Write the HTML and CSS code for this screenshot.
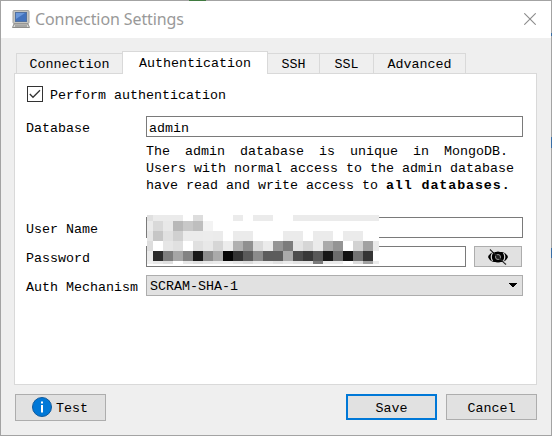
FILE: index.html
```html
<!DOCTYPE html>
<html lang="en">
<head>
<meta charset="utf-8">
<title>Connection Settings</title>
<link rel="stylesheet" href="styles.css">
</head>
<body>
<div class="window">
  <header class="titlebar">
    <svg class="app-icon" width="18" height="19" viewBox="0 0 18 19">
      <rect x="1" y=".5" width="16" height="13" rx="1" fill="#c4c4c0" stroke="#a2a2a0"/>
      <rect x="3.500" y="2.500" width="11" height="9" fill="#4272bd" stroke="#51709f"/>
      <path d="M4 3h9L4 9z" fill="#6b98da"/>
      <path d="M2 14h14l1.500 3.500H.5z" fill="#d6d6d2" stroke="#8d8d8b"/>
      <path d="M3 16h12" stroke="#777"/>
    </svg>
    <h1 class="title">Connection Settings</h1>
    <svg class="close" width="12" height="12" viewBox="0 0 12 12"><path d="M.3.3l11.400 11.400M11.700.3L.3 11.700" stroke="#8c8c8c" stroke-width="1.100"/></svg>
  </header>
  <main class="body">
    <nav class="tabs">
      <div class="tab tab-connection">Connection</div>
      <div class="tab tab-auth active">Authentication</div>
      <div class="tab tab-ssh">SSH</div>
      <div class="tab tab-ssl">SSL</div>
      <div class="tab tab-advanced">Advanced</div>
    </nav>
    <section class="pane">
      <div class="check-row">
        <span class="checkbox"><svg width="14" height="14" viewBox="0 0 14 14"><path d="M1.800 7l3.200 3.300L12 3.300" fill="none" stroke="#333" stroke-width="1.300"/></svg></span>
        <span class="check-label">Perform authentication</span>
      </div>
      <div class="row row-database">
        <span class="label">Database</span>
        <div class="input">admin</div>
      </div>
      <div class="hint">
        <div class="hint-line first">The admin database is unique in MongoDB.</div>
        <div class="hint-line">Users with normal access to the admin database</div>
        <div class="hint-line">have read and write access to <b>all databases.</b></div>
      </div>
      <div class="row row-user">
        <span class="label">User Name</span>
        <div class="input"><div class="mosaic" id="mosaic"></div></div>
      </div>
      <div class="row row-password">
        <span class="label">Password</span>
        <div class="input"></div>
        <div class="button eye">
          <svg width="22" height="18" viewBox="0 0 22 18">
            <path d="M1 9Q3 4.500 7 4h8q4 .5 6 5-2 4.500-6 5H7Q3 13.500 1 9z" fill="#000"/>
            <path d="M5.500 5q-2.500 4 0 8M16.500 5q2.500 4 0 8" fill="none" stroke="#ddd" stroke-width="1.200"/>
            <circle cx="11" cy="9" r="5.500" fill="#000"/>
            <circle cx="11" cy="9" r="2.500" fill="#222" stroke="#999" stroke-width="1"/>
            <path d="M3 1.500l16 15" stroke="#222" stroke-width="1.200"/>
            <path d="M4.500 1.500l3 3M16 12.500l3 3" stroke="#e1e1e1" stroke-width=".7"/>
          </svg>
        </div>
      </div>
      <div class="row row-mechanism">
        <span class="label">Auth Mechanism</span>
        <div class="select"><span>SCRAM-SHA-1</span><svg width="8" height="5" viewBox="0 0 8 5" shape-rendering="crispEdges"><path d="M0 0h8L4 4.500z" fill="#000"/></svg></div>
      </div>
    </section>
    <footer class="actions">
      <div class="button test">
        <svg width="20" height="20" viewBox="0 0 20 20"><circle cx="10" cy="10" r="9.500" fill="#0078d7" stroke="#125a9b"/><path d="M9 8h2v7.500H9zM9 4.500h2v2H9z" fill="#fff"/></svg>
        <span>Test</span>
      </div>
      <div class="button save">Save</div>
      <div class="button cancel">Cancel</div>
    </footer>
  </main>
</div>
<script src="mosaic.js"></script>
</body>
</html>
```
FILE: mosaic.js
```js
// Gray levels of the blocks that hide the credentials, one string per row.
const rows = [
  "e0 eb eb eb ff dd ff ff ff eb ff eb eb ff ff eb eb eb eb eb eb eb eb eb",
  "eb d9 e8 b8 c8 be f3 ff ff ff ff ff ff ff ff ff ff ff ff ff ff ff ff ff",
  "e6 c6 e0 d0 eb eb ec eb ff eb eb ff ff ff eb eb ff eb eb ff eb eb ff ff",
  "dd ff e6 e0 ff e0 e8 d6 ec b0 90 da eb 95 7c e4 d6 eb aa 94 ff d2 a2 eb",
  "eb 2a 7d a5 82 17 8c aa 05 33 5a 8b 5c 5c aa 4c 38 58 17 6c 11 72 35 ff",
  "f0 e8 e0 ff e8 e0 e8 eb ec e4 dd eb eb e2 eb e4 e4 7c eb eb ff dd a2 eb"
];
const mosaic = document.getElementById("mosaic");
for (const level of rows.join(" ").split(" ")) {
  const block = document.createElement("i");
  block.style.background = "#" + level.repeat(3);
  mosaic.append(block);
}
```
FILE: styles.css
```css
* { box-sizing: border-box; }
body {
  margin: 0;
  width: 552px;
  height: 436px;
  overflow: hidden;
  color: #000;
  font: 13.33px/16px "Liberation Mono", monospace;
}
svg { display: block; flex: none; }
/* The 1px frame shows slivers of what lies behind the dialog. */
.window {
  width: 552px;
  height: 436px;
  padding: 1px;
  background:
    linear-gradient(#efefef, #efefef) 1px 1px / 550px 434px no-repeat,
    linear-gradient(#3f7a3f, #3f7a3f) 189px 0 / 17px 1px no-repeat,
    linear-gradient(#3a6ea5, #3a6ea5) 551px 33px / 1px 3px no-repeat,
    linear-gradient(#3a6ea5, #3a6ea5) 551px 137px / 1px 11px no-repeat,
    linear-gradient(#3a6ea5, #3a6ea5) 551px 248px / 1px 10px no-repeat,
    #a3a3a3;
}
.titlebar {
  display: flex;
  align-items: center;
  height: 37px;
  padding: 0 15px 0 11px;
  background: #fff;
}
.close { margin-top: -1px; }
.title {
  flex: 1;
  margin: -1px 0 0 5px;
  color: #999;
  font: 400 16px/24px "Noto Sans", sans-serif;
  letter-spacing: -.1px;
  white-space: nowrap;
}
.body { padding: 13px 14px 0 13px; }
.tabs {
  display: flex;
  align-items: flex-end;
  height: 22px;
  padding-left: 2px;
}
.tab {
  height: 20px;
  padding-top: 3px;
  border: 1px solid #d9d9d9;
  border-width: 1px 1px 0 0;
  text-align: center;
}
.tab-connection { width: 106px; border-left-width: 1px; border-right: 0; }
.tab-auth { width: 146px; }
.tab-ssh { width: 52px; }
.tab-ssl { width: 54px; }
.tab-advanced { width: 92px; }
.tab.active {
  position: relative;
  height: 23px;
  margin-bottom: -1px;
  padding-top: 4px;
  border-left-width: 1px;
  background: #fff;
}
.pane {
  height: 312px;
  padding: 12px 12px 0;
  border: 1px solid #d9d9d9;
  background: #fff;
}
.check-row { display: flex; align-items: center; gap: 7px; height: 16px; }
.check-label { padding-top: 3px; }
.checkbox { width: 16px; height: 16px; border: 1px solid #333; }
.row { display: flex; height: 21px; }
.label {
  flex: none;
  width: 120px;
  margin-left: -1px;
  padding-top: 5px;
  white-space: nowrap;
}
.row-database { margin-top: 14px; }
.input {
  flex: none;
  width: 377px;
  height: 21px;
  padding: 4px 0 0 2px;
  border: 1px solid #7a7a7a;
  background: #fff;
}
.hint { margin: 6px 9px 0 119px; }
.hint-line { height: 17px; line-height: 17px; white-space: nowrap; }
.hint-line.first { text-align: justify; text-align-last: justify; margin-right: 7px; }
.hint b { letter-spacing: .9px; }
.row-user { margin-top: 23px; }
.row-user .input { position: relative; }
.row-password { margin-top: 8px; }
.row-password .input { width: 320px; }
.row-mechanism { margin-top: 8px; }
.mosaic {
  position: absolute;
  left: 0;
  top: -3px;
  z-index: 1;
  display: grid;
  grid-template-columns: 6px repeat(22, 10px) 6px;
  grid-template-rows: 6px repeat(4, 10px) 3px;
}
.button, .select { border: 1px solid #adadad; background: #e1e1e1; }
.button { display: flex; align-items: center; justify-content: center; }
.eye { width: 48px; height: 21px; margin-left: 8px; }
.select {
  display: flex;
  flex: none;
  align-items: center;
  justify-content: space-between;
  width: 377px;
  height: 21px;
  padding: 0 5px 0 3px;
}
.select span { padding-top: 3px; }
.actions { display: flex; margin-top: 9px; padding-left: 1px; }
.actions .button { width: 91px; height: 26px; padding-top: 4px; }
.actions .test { height: 27px; padding: 0 1px 0 0; gap: 4px; }
.test svg { margin-top: -1px; }
.actions .test span { padding-top: 3px; }
.actions .save { margin-left: 240px; border: 2px solid #0078d7; }
.actions .cancel { margin-left: 9px; }
```
